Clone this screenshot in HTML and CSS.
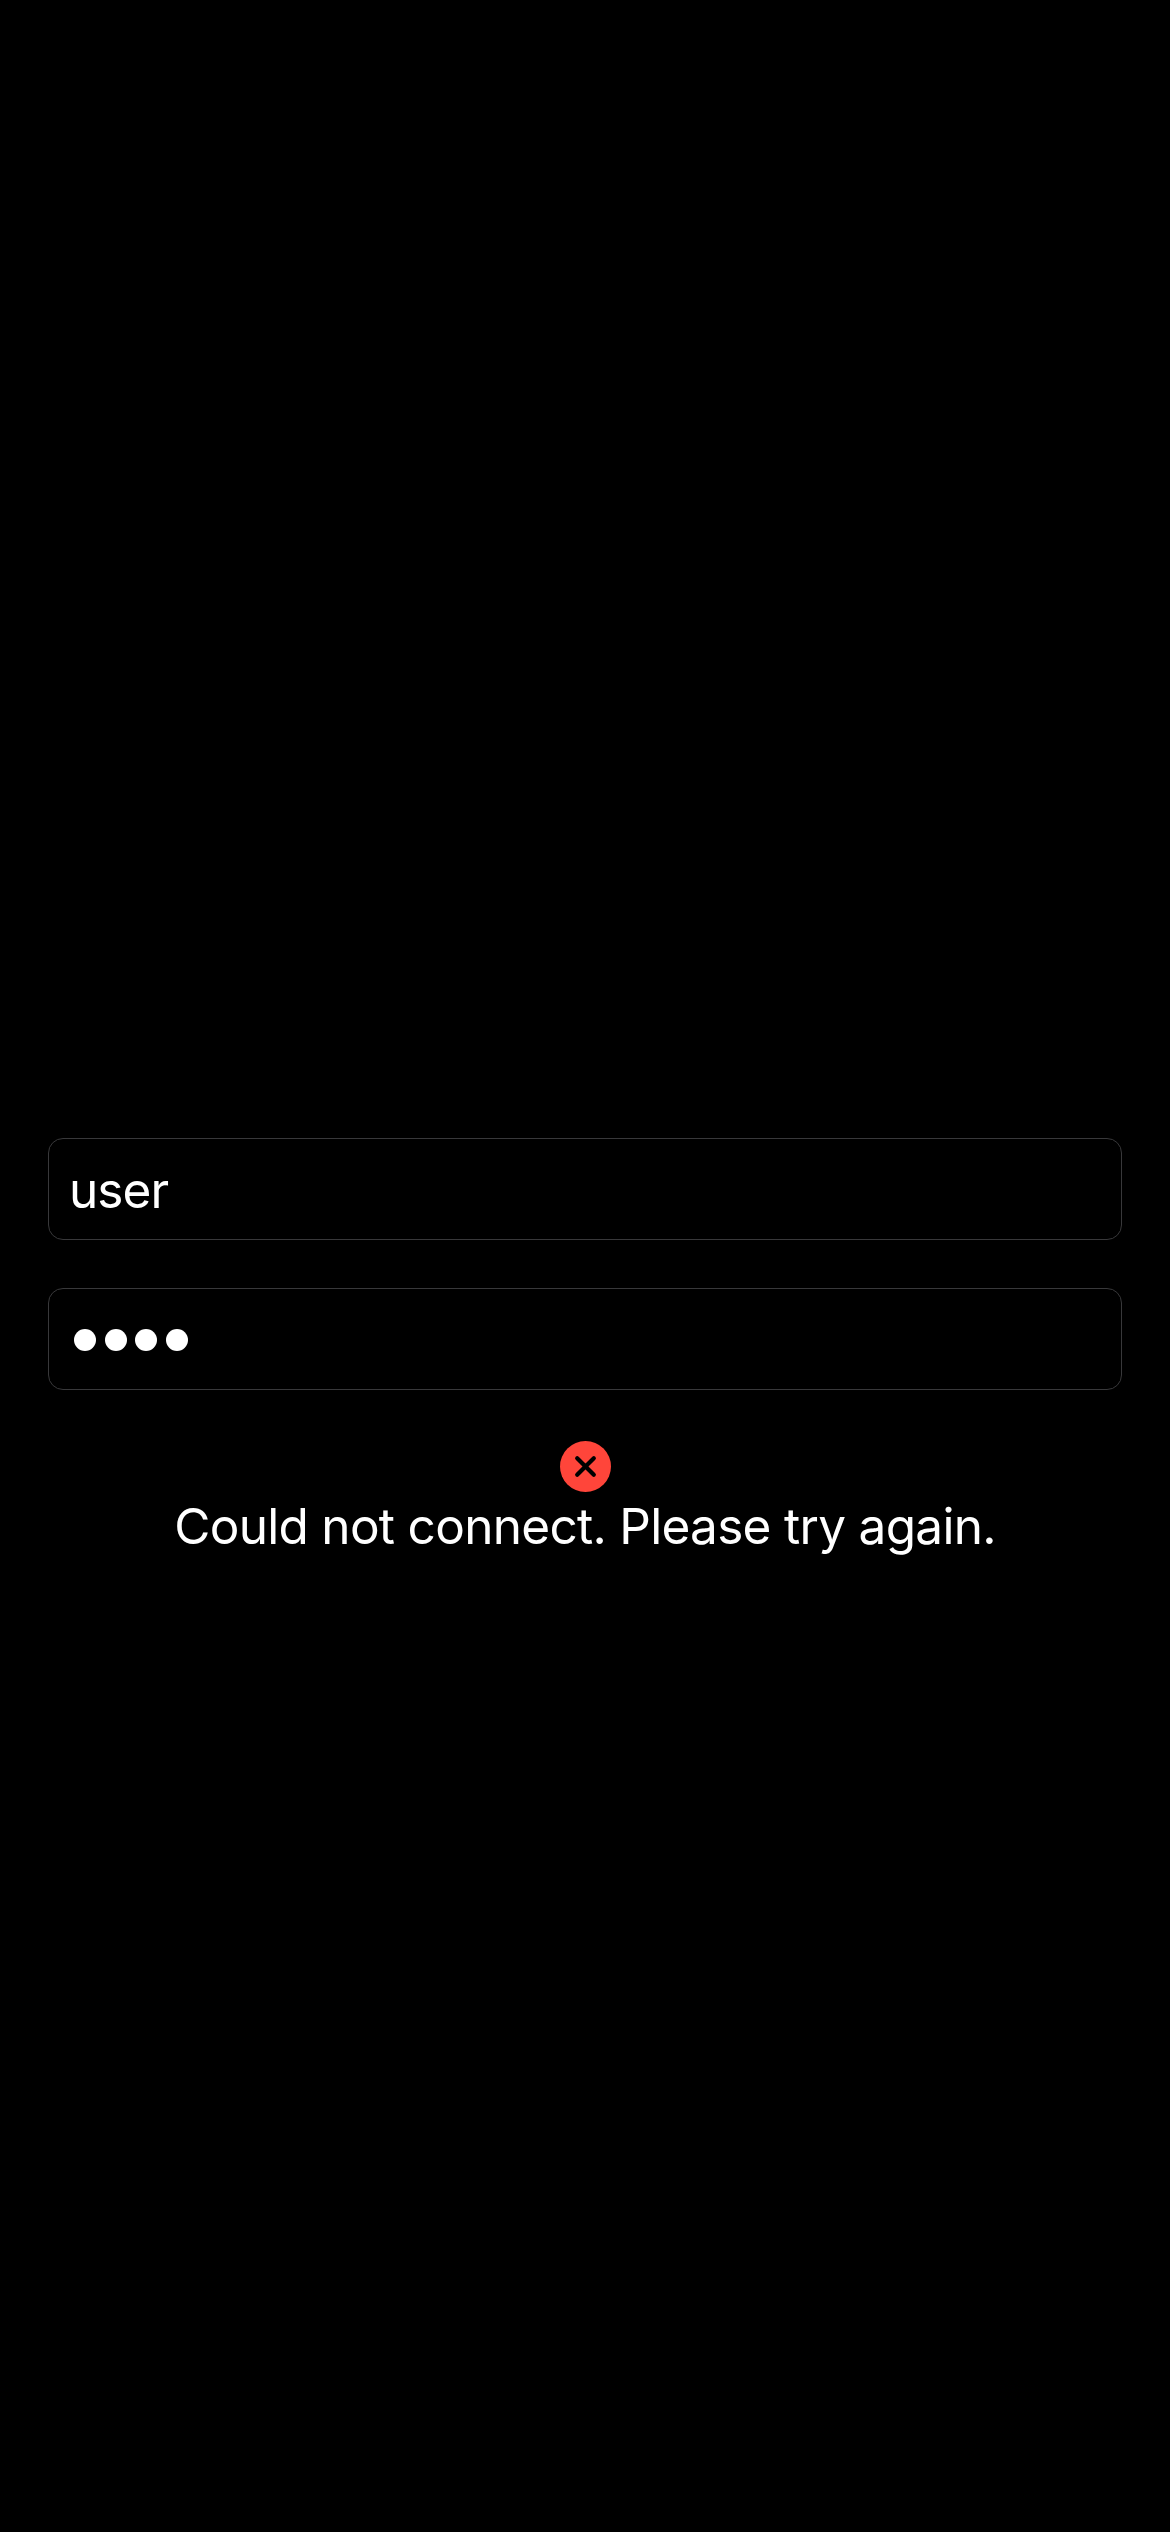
FILE: index.html
```html
<!DOCTYPE html>
<html lang="en">
<head>
<meta charset="utf-8">
<title>Sign in</title>
<link rel="stylesheet" href="styles.css">
</head>
<body>
<main class="login">
  <div class="field"><span class="value">user</span></div>
  <div class="field field-password" role="img" aria-label="Password">
    <i class="dot"></i><i class="dot"></i><i class="dot"></i><i class="dot"></i>
  </div>
  <div class="status">
    <svg class="status-icon" viewBox="0 0 51 51" aria-hidden="true">
      <circle cx="25.5" cy="25.5" r="25.5" fill="#ff453a"/>
      <path d="M17.2 17.2 33.8 33.8M33.8 17.2 17.2 33.8" stroke="#000" stroke-width="4.2" stroke-linecap="round"/>
    </svg>
    <p class="message">Could not connect. Please try again.</p>
  </div>
</main>
</body>
</html>
```
FILE: styles.css
```css
* { box-sizing: border-box; }
body {
  margin: 0;
  background: #000;
  color: #fff;
  font-family: Inter, "Liberation Sans", sans-serif;
  font-size: 49.5px;
}
.login {
  min-height: 2532px;
  padding: 1138px 48px 0;
  display: flex;
  flex-direction: column;
  gap: 48px;
}
.field {
  height: 102px;
  padding: 0 20px;
  display: flex;
  align-items: center;
  border: 1px solid #38383a;
  border-radius: 15px;
}
.value { line-height: 60px; padding-top: 2px; letter-spacing: -0.9px; }
.field-password { gap: 8.6px; padding: 2px 0 0 25px; }
.dot { width: 22px; height: 22px; border-radius: 50%; background: #fff; }
.status {
  margin-top: 3px;
  display: flex;
  flex-direction: column;
  align-items: center;
}
.status-icon { width: 51px; height: 51px; display: block; margin-left: 1px; }
.message {
  margin: 4px 0 0;
  line-height: 60px;
  letter-spacing: -0.7px;
  white-space: nowrap;
}
```
